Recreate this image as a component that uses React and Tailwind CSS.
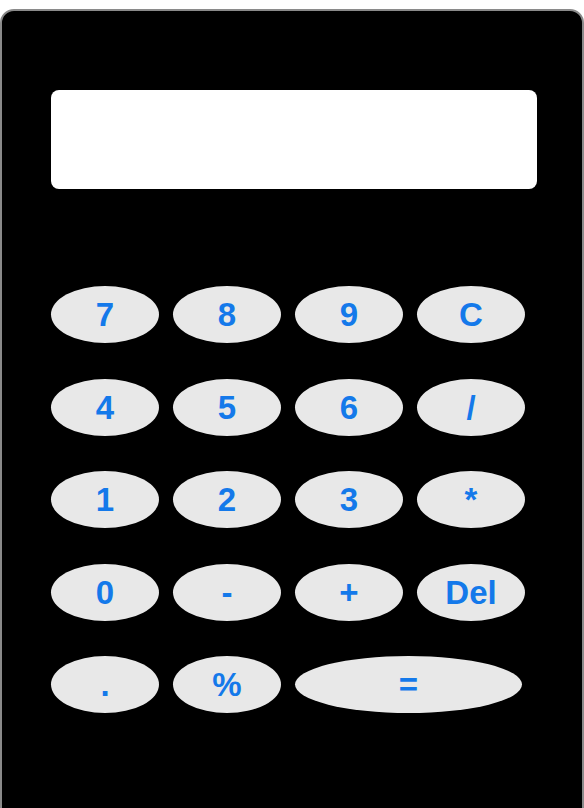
const rows = [
  ["7", "8", "9", "C"],
  ["4", "5", "6", "/"],
  ["1", "2", "3", "*"],
  ["0", "-", "+", "Del"],
];

function Key({ label, wide }) {
  return (
    <button
      className={`${wide ? "w-[227px]" : "w-[108px]"} h-[57px] rounded-[50%] bg-[#e8e8e8] text-[#1479ea] text-[33px] font-bold leading-none flex items-center justify-center`}
    >
      {label}
    </button>
  );
}

export default function App() {
  return (
    <div className="w-[584px] h-[808px] pt-[9px] bg-white overflow-hidden" style={{ fontFamily: '"Liberation Sans", Arial, sans-serif' }}>
      <div className="h-[830px] bg-black border-2 border-[#8a8a8a] rounded-[14px] pt-[79px] pl-[49px] pr-[45px]">
        <div className="h-[99px] bg-white rounded-[8px]" />

        <div className="mt-[97px] flex flex-col gap-[35.5px]">
          {rows.map((row, i) => (
            <div key={i} className="flex gap-[14px]">
              {row.map((k) => (
                <Key key={k} label={k} />
              ))}
            </div>
          ))}
          <div className="flex gap-[14px]">
            <Key label="." />
            <Key label="%" />
            <Key label="=" wide />
          </div>
        </div>
      </div>
    </div>
  );
}
